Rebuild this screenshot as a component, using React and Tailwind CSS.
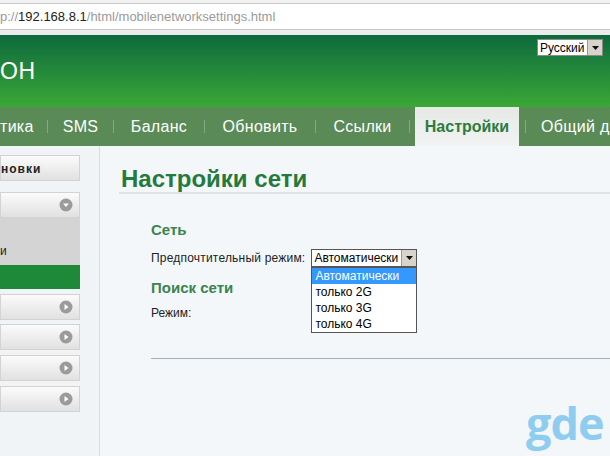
import React from "react";

function CircleIcon({ dir }) {
  return (
    <svg width="14" height="14" viewBox="0 0 14 14">
      <circle cx="7" cy="7" r="6.5" fill="#9b9b9b" />
      {dir === "down" ? (
        <polygon points="4,5.5 10,5.5 7,9" fill="#ffffff" />
      ) : (
        <polygon points="5.5,4 9.5,7 5.5,10" fill="#ffffff" />
      )}
    </svg>
  );
}

function Arrow() {
  return (
    <div className="w-[15px] h-full shrink-0 bg-[#d8d4cc] border-l border-[#9a9a9a] flex items-center justify-center">
      <svg width="7" height="4" viewBox="0 0 7 4">
        <polygon points="0,0 7,0 3.5,4" fill="#111" />
      </svg>
    </div>
  );
}

function SideBtn({ children, icon, className = "" }) {
  return (
    <div
      className={
        "w-[80px] h-[26px] bg-gradient-to-b from-[#fbfbfb] to-[#e1e1e1] border border-[#d3d3d3] flex items-center justify-between pr-[6px] " +
        className
      }
    >
      <div>{children}</div>
      {icon && <CircleIcon dir={icon} />}
    </div>
  );
}

function Sep() {
  return <div className="w-px h-[13px] shrink-0 bg-[#86a983]" />;
}

export default function App() {
  return (
    <div className="relative w-[610px] h-[456px] overflow-hidden bg-[#f4f7f9] font-['Liberation_Sans',Arial,sans-serif] flex flex-col">
      {/* URL bar */}
      <div className="h-[3px] bg-[#f2f2f2]" />
      <div className="h-[27px] bg-white border-t border-b border-[#c8c8c8] flex items-center text-[13px] whitespace-nowrap">
        <span className="text-[#9a9a9a]">p://</span>
        <span className="text-[#222]">192.168.8.1</span>
        <span className="text-[#9a9a9a]">/html/mobilenetworksettings.html</span>
      </div>
      <div className="h-[5px] bg-[#ececec]" />

      {/* Header */}
      <div className="h-[72px] bg-gradient-to-b from-[#0b6a3b] to-[#3aa834] flex justify-between items-start">
        <div className="mt-[25px] text-white text-[23px] leading-none tracking-[0.5px] whitespace-nowrap">
          ОН
        </div>
        <div className="mt-[4px] mr-[7px] w-[66px] h-[17px] bg-white border border-[#8a8a8a] flex items-center justify-between text-[12px] text-black">
          <span className="pl-[2px] leading-none">Русский</span>
          <Arrow />
        </div>
      </div>

      {/* Nav */}
      <div className="h-[39px] bg-[#5a8b56] flex items-center text-white text-[16px] whitespace-nowrap overflow-hidden">
        <div className="w-[47px] shrink-0 tracking-[0.3px]">тика</div>
        <Sep />
        <div className="w-[65px] shrink-0 text-center tracking-[0.3px]">SMS</div>
        <Sep />
        <div className="w-[90px] shrink-0 text-center tracking-[0.3px]">Баланс</div>
        <Sep />
        <div className="w-[110px] shrink-0 text-center tracking-[0.3px]">Обновить</div>
        <Sep />
        <div className="w-[93px] shrink-0 text-center tracking-[0.3px]">Ссылки</div>
        <Sep />
        <div className="w-[5px] shrink-0" />
        <div className="self-end shrink-0 w-[104px] h-[39px] bg-gradient-to-b from-[#e6e8e6] to-[#f1f4f3] flex items-center justify-center font-bold text-[#2d7b3f]">
          Настройки
        </div>
        <div className="w-[6px] shrink-0" />
        <Sep />
        <div className="pl-[15px] shrink-0 tracking-[0.3px]">Общий д</div>
      </div>

      {/* Body */}
      <div className="flex-1 flex">
        {/* Sidebar */}
        <div className="w-[100px] shrink-0 border-r border-[#d7dde1] bg-[#f1f4f6] pt-[9px] flex flex-col">
          <SideBtn>
            <span className="font-bold text-[12px] tracking-[1px] text-[#222] leading-none">новки</span>
          </SideBtn>
          <SideBtn icon="down" className="mt-[11px]" />
          <div className="w-[80px] h-[47px] bg-[#d4d4d4] flex items-end pb-[8px] text-[12px] text-[#222] leading-none">
            и
          </div>
          <div className="w-[80px] h-[24px] bg-[#1e8a39]" />
          <SideBtn icon="right" className="mt-[5px]" />
          <SideBtn icon="right" className="mt-[4px]" />
          <SideBtn icon="right" className="mt-[5px]" />
          <SideBtn icon="right" className="mt-[5px]" />
        </div>

        {/* Content */}
        <div className="flex-1 pl-[19px] pt-[21px]">
          <div className="border-b-2 border-[#dfe4e7] pb-[1px] pl-[2px]">
            <div className="text-[24px] font-bold leading-none text-[#237a3c] whitespace-nowrap">
              Настройки сети
            </div>
          </div>
          <div className="pl-[32px]">
            <div className="mt-[28px] text-[15px] font-bold leading-none text-[#3a8450]">Сеть</div>
            <div className="mt-[12px] flex items-center text-[12px] text-[#222] whitespace-nowrap">
              <span className="tracking-[0.2px]">Предпочтительный режим:</span>
              <div className="relative ml-[6px]">
                <div className="w-[106px] h-[18px] bg-white border border-[#555] flex items-center justify-between">
                  <span className="pl-[2px] leading-none text-black">Автоматически</span>
                  <Arrow />
                </div>
                <div className="absolute left-0 top-[18px] w-[106px] bg-white border border-[#555] flex flex-col text-[12px] leading-none">
                  <div className="h-[16px] bg-[#3399ff] text-white flex items-center pl-[3px]">Автоматически</div>
                  <div className="h-[16px] text-black flex items-center pl-[3px]">только 2G</div>
                  <div className="h-[16px] text-black flex items-center pl-[3px]">только 3G</div>
                  <div className="h-[16px] text-black flex items-center pl-[3px]">только 4G</div>
                </div>
              </div>
            </div>
            <div className="mt-[13px] text-[15px] font-bold leading-none text-[#3a8450]">Поиск сети</div>
            <div className="mt-[12px] text-[12px] leading-none text-[#222]">Режим:</div>
            <div className="mt-[39px] h-px bg-[#a8afb4]" />
          </div>
        </div>
      </div>

      <div className="absolute left-[526px] top-[400px] text-[45px] font-bold leading-none text-[#8fcdf0] font-['Open_Sans',sans-serif] tracking-[-1px]">
        gde
      </div>
    </div>
  );
}
